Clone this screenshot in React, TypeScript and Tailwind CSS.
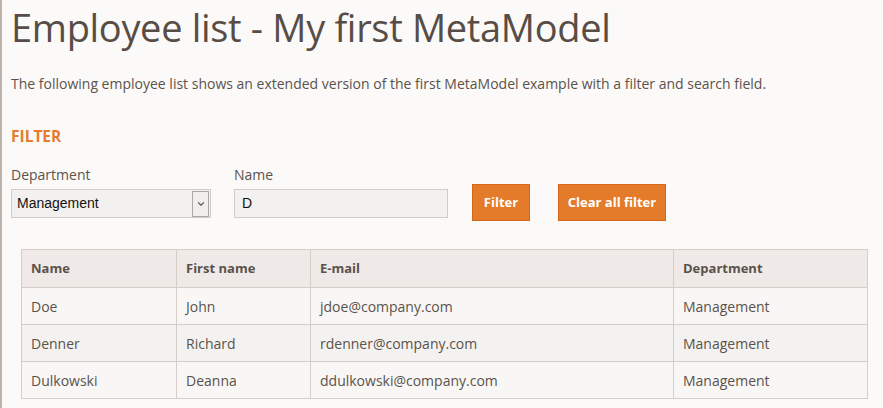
import { ChevronDown } from "lucide-react";

type Employee = {
  name: string;
  firstName: string;
  email: string;
  department: string;
};

const employees: Employee[] = [
  { name: "Doe", firstName: "John", email: "jdoe@company.com", department: "Management" },
  { name: "Denner", firstName: "Richard", email: "rdenner@company.com", department: "Management" },
  { name: "Dulkowski", firstName: "Deanna", email: "ddulkowski@company.com", department: "Management" },
];

export default function App() {
  return (
    <div className="min-h-screen border-l-2 border-[#bdb3ab] bg-[#fbfaf9] pl-[9px] font-['Open_Sans',sans-serif] text-[#5b524b]">
      <h1 className="pt-[3px] text-[38px] leading-[48px] tracking-[-0.32px] text-[#574d46]">
        Employee list - My first MetaModel
      </h1>

      <p className="mt-[24px] text-[14px] leading-[18px]">
        The following employee list shows an extended version of the first MetaModel example with a
        filter and search field.
      </p>

      <h2 className="mt-[33px] text-[15.5px] font-bold leading-[20px] text-[#e67c2c]">FILTER</h2>

      <div className="mt-[19px] flex items-end">
        <div className="w-[200px]">
          <label className="block text-[14px] leading-[19px]">Department</label>
          <div className="mt-[5px] flex h-[29px] items-center border border-[#d5cbc4] bg-[#f3f1ef] pl-[5px] pr-[1px] font-['Liberation_Sans',sans-serif] text-[14px] text-[#111]">
            <span className="flex-1">Management</span>
            <span className="flex h-[26px] w-[17px] items-center justify-center border border-[#a9a9a9] bg-[#f0efee]">
              <ChevronDown className="size-[10px] text-[#666]" strokeWidth={3} />
            </span>
          </div>
        </div>

        <div className="ml-[23px] w-[214px]">
          <label className="block text-[14px] leading-[19px]">Name</label>
          <div className="mt-[5px] flex h-[29px] items-center border border-[#d5cbc4] bg-[#f3f1ef] pl-[7px] font-['Liberation_Sans',sans-serif] text-[14px] text-[#111]">
            D
          </div>
        </div>

        <button
          type="button"
          className="mb-[-3px] ml-[24px] h-[37px] w-[58px] border border-[#d86418] bg-[#e47b2a] text-[13px] font-bold text-white"
        >
          Filter
        </button>
        <button
          type="button"
          className="mb-[-3px] ml-[28px] h-[37px] w-[108px] border border-[#d86418] bg-[#e47b2a] text-[13px] font-bold text-white"
        >
          Clear all filter
        </button>
      </div>

      <table className="ml-[10px] mt-[31px] w-[846px] table-fixed border-collapse border border-[#d6cdc6] text-left">
        <colgroup>
          <col className="w-[155px]" />
          <col className="w-[134px]" />
          <col className="w-[363px]" />
          <col className="w-[194px]" />
        </colgroup>
        <thead>
          <tr className="h-[38px] bg-[#efeae7]">
            <th className="border border-[#d6cdc6] pl-[9px] text-[13px] font-bold">Name</th>
            <th className="border border-[#d6cdc6] pl-[9px] text-[13px] font-bold">First name</th>
            <th className="border border-[#d6cdc6] pl-[9px] text-[13px] font-bold">E-mail</th>
            <th className="border border-[#d6cdc6] pl-[9px] text-[13px] font-bold">Department</th>
          </tr>
        </thead>
        <tbody>
          {employees.map((employee, index) => (
            <tr
              key={employee.email}
              className={index % 2 === 1 ? "h-[37px] bg-[#f3f2f0]" : "h-[37px] bg-[#f8f7f6]"}
            >
              <td className="border border-[#d6cdc6] pl-[9px] text-[14px]">{employee.name}</td>
              <td className="border border-[#d6cdc6] pl-[9px] text-[14px]">{employee.firstName}</td>
              <td className="border border-[#d6cdc6] pl-[9px] text-[14px]">{employee.email}</td>
              <td className="border border-[#d6cdc6] pl-[9px] text-[14px]">{employee.department}</td>
            </tr>
          ))}
        </tbody>
      </table>
    </div>
  );
}
